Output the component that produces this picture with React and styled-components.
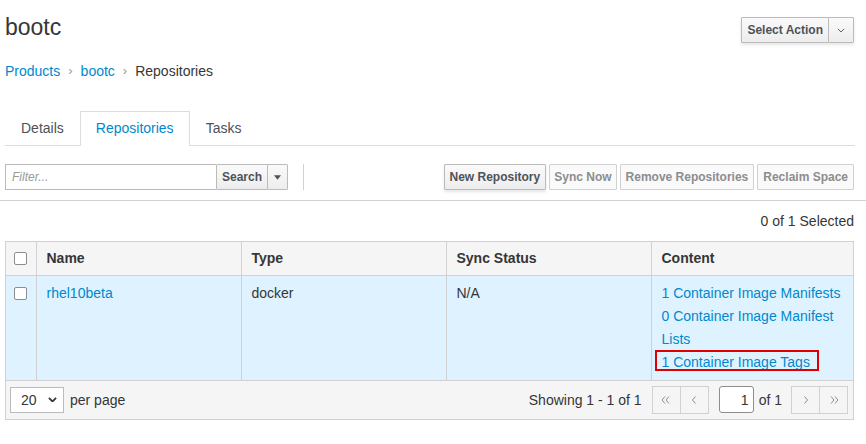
import React from 'react';
import styled, { createGlobalStyle } from 'styled-components';

const Global = createGlobalStyle`
  html, body { margin: 0; padding: 0; background: #fff; }
  body {
    font-family: "Liberation Sans", Arial, sans-serif;
    color: #363636;
    font-size: 14px;
  }
  * { box-sizing: border-box; }
`;

const Page = styled.div`
  width: 866px;
  padding-top: 14px;
`;

const Section = styled.div`
  padding: 0 12px 0 5px;
`;

const HeaderRow = styled(Section)`
  display: flex;
  justify-content: space-between;
  align-items: flex-start;
  height: 26px;
`;

const Title = styled.h1`
  margin: 0;
  font-size: 23px;
  font-weight: 400;
  line-height: 26px;
  color: #363636;
`;

const SplitButton = styled.div`
  display: flex;
  margin-top: 3px;
  box-shadow: 0 2px 3px rgba(3, 3, 3, 0.1);
`;

const Btn = styled.button`
  font-family: inherit;
  height: 26px;
  padding: 0 ${(p) => p.$px ?? 6}px;
  font-size: 12px;
  font-weight: 700;
  color: ${(p) => (p.disabled ? '#8b8d8f' : '#4d5258')};
  background: ${(p) => (p.disabled ? '#fafafa' : 'linear-gradient(#fafafa, #ededed)')};
  border: 1px solid ${(p) => (p.disabled ? '#d1d1d1' : '#bbb')};
  border-radius: 1px;
  display: inline-flex;
  align-items: center;
  justify-content: center;
  box-shadow: ${(p) => (p.$shadow ? '0 2px 3px rgba(3,3,3,0.1)' : 'none')};
  & + & { margin-left: -1px; }
`;

const Breadcrumb = styled(Section)`
  margin-top: 21px;
  display: flex;
  align-items: center;
  line-height: 20px;
  font-size: 14px;
`;

const Crumb = styled.span`
  color: ${(p) => (p.$active ? '#363636' : '#0088ce')};
`;

const Sep = styled.span`
  color: #9c9c9c;
  padding: 0 8px;
  font-size: 13px;
`;

const TabBar = styled.div`
  margin: 30px 11px 0 5px;
  display: flex;
  border-bottom: 1px solid #ddd;
`;

const Tab = styled.div`
  padding: 8px 15px;
  line-height: 17px;
  font-size: 14px;
  border: 1px solid ${(p) => (p.$active ? '#ddd' : 'transparent')};
  border-bottom: none;
  margin-bottom: ${(p) => (p.$active ? '-1px' : '0')};
  padding-bottom: ${(p) => (p.$active ? '9px' : '8px')};
  background: #fff;
  color: ${(p) => (p.$active ? '#0088ce' : '#4d5258')};
`;

const Toolbar = styled(Section)`
  margin-top: 18px;
  display: flex;
  align-items: center;
`;

const FilterGroup = styled.div`
  display: flex;
`;

const FilterInput = styled.div`
  width: 211px;
  height: 26px;
  border: 1px solid #bbb;
  border-right: none;
  padding: 0 6px;
  font-size: 12px;
  font-style: italic;
  color: #999;
  display: flex;
  align-items: center;
`;

const VRule = styled.div`
  width: 1px;
  height: 26px;
  background: #d1d1d1;
  margin-left: 15px;
`;

const Actions = styled.div`
  margin-left: auto;
  display: flex;
  gap: 4px;
`;

const Divider = styled.div`
  margin-top: 10px;
  height: 1px;
  background: #d1d1d1;
`;

const SelectedCount = styled(Section)`
  margin-top: 10px;
  text-align: right;
  line-height: 20px;
  font-size: 14px;
  color: #363636;
`;

const TableWrap = styled.div`
  margin: 10px 12px 0 5px;
  border: 1px solid #d1d1d1;
`;

const Table = styled.table`
  width: 100%;
  border-collapse: collapse;
  table-layout: fixed;
`;

const Th = styled.th`
  background: #f5f5f5;
  text-align: left;
  font-weight: 700;
  font-size: 14px;
  line-height: 20px;
  height: 33px;
  padding: 6px 10px;
  border-left: 1px solid #d1d1d1;
  border-bottom: 1px solid #d1d1d1;
  color: #363636;
  &:first-child { border-left: none; padding: 0 0 0 8px; }
`;

const Td = styled.td`
  background: #def3ff;
  vertical-align: top;
  font-size: 14px;
  line-height: 23px;
  padding: 6px 10px;
  border-left: 1px solid #d1d1d1;
  color: #363636;
  &:first-child { border-left: none; padding: 6px 0 0 8px; }
`;

const Check = styled.span`
  display: block;
  width: 13px;
  height: 13px;
  border: 1px solid #8b8d8f;
  border-radius: 2px;
  background: #fff;
  margin-top: ${(p) => p.$mt ?? 0}px;
`;

const Link = styled.a`
  color: #0088ce;
  text-decoration: none;
  display: ${(p) => (p.$block ? 'block' : 'inline')};
`;

const Highlight = styled.span`
  position: relative;
  color: #0088ce;
  &::after {
    content: '';
    position: absolute;
    top: -4px;
    bottom: -1px;
    left: -7px;
    right: -9px;
    border: 2px solid #e00000;
  }
`;

const Footer = styled.div`
  background: #f5f5f5;
  border-top: 1px solid #d1d1d1;
  height: 39px;
  display: flex;
  align-items: center;
  justify-content: space-between;
  padding: 0 5px 0 4px;
`;

const PerPage = styled.div`
  display: flex;
  align-items: center;
  gap: 6px;
  font-size: 14px;
`;

const SelectBox = styled.div`
  width: 54px;
  height: 26px;
  border: 1px solid #bbb;
  background: #fff;
  display: flex;
  align-items: center;
  justify-content: space-between;
  padding: 0 6px 0 10px;
  font-size: 14px;
  color: #363636;
`;

const Pager = styled.div`
  display: flex;
  align-items: center;
  font-size: 14px;
`;

const PageBtns = styled.div`
  display: flex;
  margin-left: ${(p) => p.$ml ?? 0}px;
`;

const PageBtn = styled.div`
  width: 29px;
  height: 28px;
  border: 1px solid #d1d1d1;
  background: #f5f5f5;
  display: flex;
  align-items: center;
  justify-content: center;
  & + & { margin-left: -1px; }
`;

const PageInput = styled.div`
  width: 35px;
  height: 27px;
  border: 1px solid #8b8d8f;
  border-radius: 3px;
  background: #fff;
  margin-left: 10px;
  display: flex;
  align-items: center;
  justify-content: flex-end;
  padding-right: 4px;
  font-size: 14px;
`;

const OfText = styled.span`
  margin-left: 5px;
`;

const Caret = () => (
  <svg width="8" height="5" viewBox="0 0 8 5"><path d="M0 0h8L4 5z" fill="#4d5258" /></svg>
);

const ChevDown = ({ w = 8, sw = 1.2, color = '#4d5258' }) => (
  <svg width={w} height={w * 0.6} viewBox="0 0 10 6">
    <path d="M1 1l4 4 4-4" fill="none" stroke={color} strokeWidth={sw} />
  </svg>
);

const Angle = ({ dir = 'left', double = false }) => {
  const flip = dir === 'right' ? 'scale(-1,1) translate(-12,0)' : undefined;
  return (
    <svg width="12" height="12" viewBox="0 0 12 12">
      <g transform={flip} fill="none" stroke="#8b8d8f" strokeWidth="1">
        {double ? (
          <>
            <path d="M5 2.5L2 6l3 3.5" />
            <path d="M9 2.5L6 6l3 3.5" />
          </>
        ) : (
          <path d="M7.5 2.5L4.5 6l3 3.5" />
        )}
      </g>
    </svg>
  );
};

export default function App() {
  return (
    <Page>
      <Global />
      <HeaderRow>
        <Title>bootc</Title>
        <SplitButton>
          <Btn $px={5}>Select Action</Btn>
          <Btn style={{ width: 26 }}><ChevDown w={8} sw={1.1} /></Btn>
        </SplitButton>
      </HeaderRow>

      <Breadcrumb>
        <Crumb>Products</Crumb>
        <Sep>›</Sep>
        <Crumb>bootc</Crumb>
        <Sep>›</Sep>
        <Crumb $active>Repositories</Crumb>
      </Breadcrumb>

      <TabBar>
        <Tab>Details</Tab>
        <Tab $active>Repositories</Tab>
        <Tab>Tasks</Tab>
      </TabBar>

      <Toolbar>
        <FilterGroup>
          <FilterInput>Filter...</FilterInput>
          <Btn $px={5}>Search</Btn>
          <Btn style={{ width: 21 }}><Caret /></Btn>
        </FilterGroup>
        <VRule />
        <Actions>
          <Btn $px={5} $shadow>New Repository</Btn>
          <Btn $px={4} disabled>Sync Now</Btn>
          <Btn $px={5} disabled>Remove Repositories</Btn>
          <Btn $px={5} disabled>Reclaim Space</Btn>
        </Actions>
      </Toolbar>

      <Divider />

      <SelectedCount>0 of 1 Selected</SelectedCount>

      <TableWrap>
        <Table>
          <colgroup>
            <col style={{ width: 30 }} />
            <col style={{ width: 205 }} />
            <col style={{ width: 205 }} />
            <col style={{ width: 205 }} />
            <col />
          </colgroup>
          <thead>
            <tr>
              <Th><Check /></Th>
              <Th>Name</Th>
              <Th>Type</Th>
              <Th>Sync Status</Th>
              <Th>Content</Th>
            </tr>
          </thead>
          <tbody>
            <tr>
              <Td><Check $mt={5} /></Td>
              <Td><Link>rhel10beta</Link></Td>
              <Td>docker</Td>
              <Td>N/A</Td>
              <Td>
                <Link $block>1 Container Image Manifests</Link>
                <Link $block>0 Container Image Manifest Lists</Link>
                <Highlight>1 Container Image Tags</Highlight>
              </Td>
            </tr>
          </tbody>
        </Table>
        <Footer>
          <PerPage>
            <SelectBox>20 <ChevDown w={9} sw={2} color="#363636" /></SelectBox>
            per page
          </PerPage>
          <Pager>
            <span>Showing 1 - 1 of 1</span>
            <PageBtns $ml={10}>
              <PageBtn><Angle double /></PageBtn>
              <PageBtn><Angle /></PageBtn>
            </PageBtns>
            <PageInput>1</PageInput>
            <OfText>of 1</OfText>
            <PageBtns $ml={9}>
              <PageBtn><Angle dir="right" /></PageBtn>
              <PageBtn><Angle dir="right" double /></PageBtn>
            </PageBtns>
          </Pager>
        </Footer>
      </TableWrap>
    </Page>
  );
}
